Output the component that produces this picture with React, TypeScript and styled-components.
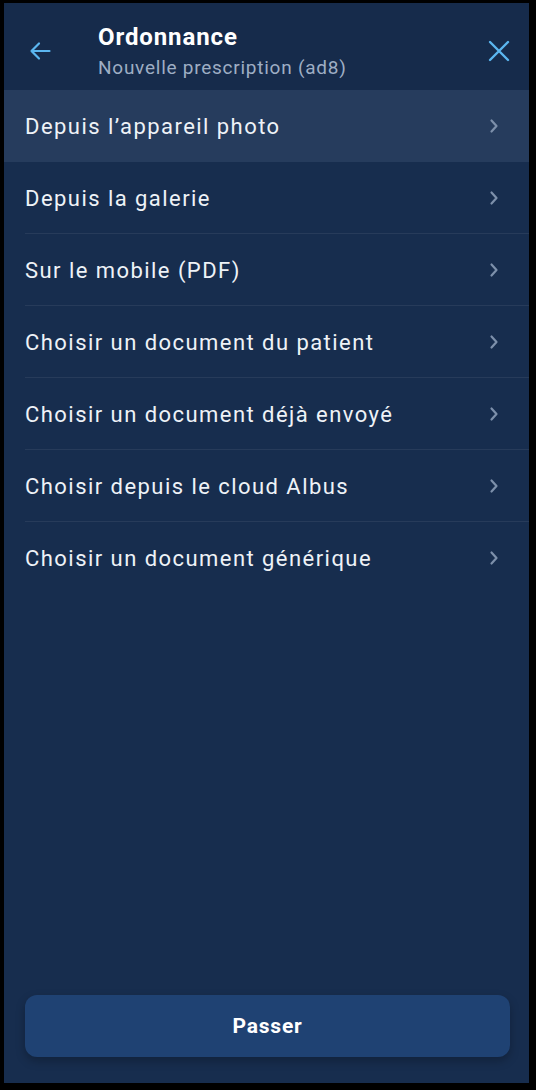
import React from 'react';
import styled, { createGlobalStyle } from 'styled-components';

const GlobalStyle = createGlobalStyle`
  html, body {
    margin: 0;
    padding: 0;
    background: #000;
  }
  * {
    box-sizing: border-box;
  }
`;

const Frame = styled.div`
  width: 536px;
  height: 1090px;
  padding: 3px 7px 7px 4px;
  background: #000;
`;

const Screen = styled.div`
  height: 100%;
  display: flex;
  flex-direction: column;
  background: #172d4e;
  font-family: Roboto, 'Noto Sans', sans-serif;
  color: #e8edf4;
`;

const Header = styled.div`
  height: 87px;
  display: flex;
  align-items: flex-start;
  padding: 20px 16px 0 22px;
  background: #162b4b;
`;

const IconButton = styled.button`
  width: 28px;
  height: 28px;
  margin-top: 14px;
  padding: 0;
  border: none;
  background: none;
  color: #5bb6f0;
  display: flex;
  align-items: center;
  justify-content: center;
  cursor: pointer;
`;

const Titles = styled.div`
  flex: 1;
  display: flex;
  flex-direction: column;
  margin-left: 44px;
`;

const Title = styled.div`
  font-size: 24px;
  font-weight: 700;
  line-height: 29px;
  letter-spacing: 0.9px;
  color: #ffffff;
`;

const Subtitle = styled.div`
  font-size: 19px;
  line-height: 24px;
  letter-spacing: 0.75px;
  color: #9eaec4;
  margin-top: 4px;
`;

const List = styled.div`
  flex: 1;
  display: flex;
  flex-direction: column;
`;

const Row = styled.div<{ $active?: boolean }>`
  height: 72px;
  display: flex;
  align-items: center;
  justify-content: space-between;
  padding: 0 29px 0 21px;
  position: relative;
  background: ${(p) => (p.$active ? '#263c5d' : 'transparent')};
  cursor: pointer;
`;

const Divider = styled.div`
  position: absolute;
  left: 21px;
  right: 0;
  bottom: 0;
  height: 1px;
  background: rgba(255, 255, 255, 0.07);
`;

const RowLabel = styled.span`
  font-size: 22px;
  letter-spacing: 1.45px;
  color: #eef2f7;
`;

const Chevron = styled.span`
  display: flex;
  color: #7d90ab;
`;

const Footer = styled.div`
  padding: 0 19px 26px 21px;
`;

const PassButton = styled.button`
  width: 100%;
  height: 62px;
  border: none;
  border-radius: 12px;
  background: #1f4273;
  box-shadow: 0 4px 10px rgba(0, 0, 0, 0.25);
  color: #ffffff;
  font-family: Roboto, 'Noto Sans', sans-serif;
  font-size: 21px;
  font-weight: 700;
  letter-spacing: 0.8px;
  cursor: pointer;
`;

const options = [
  'Depuis l’appareil photo',
  'Depuis la galerie',
  'Sur le mobile (PDF)',
  'Choisir un document du patient',
  'Choisir un document déjà envoyé',
  'Choisir depuis le cloud Albus',
  'Choisir un document générique',
];

const ChevronIcon = () => (
  <svg width="12" height="16" viewBox="0 0 12 16" fill="none">
    <path d="M3.5 2.5 L8.5 8 L3.5 13.5" stroke="currentColor" strokeWidth="2.2" strokeLinecap="round" strokeLinejoin="round" />
  </svg>
);

const App: React.FC = () => {
  return (
    <>
      <GlobalStyle />
      <Frame>
        <Screen>
          <Header>
            <IconButton aria-label="Retour">
              <svg width="24" height="24" viewBox="0 0 24 24" fill="none">
                <path d="M21.5 12H3.5M11 4.5L3.5 12L11 19.5" stroke="currentColor" strokeWidth="2.2" strokeLinecap="round" strokeLinejoin="round" />
              </svg>
            </IconButton>
            <Titles>
              <Title>Ordonnance</Title>
              <Subtitle>Nouvelle prescription (ad8)</Subtitle>
            </Titles>
            <IconButton aria-label="Fermer">
              <svg width="22" height="22" viewBox="0 0 22 22" fill="none">
                <path d="M2 2L20 20M20 2L2 20" stroke="currentColor" strokeWidth="2.4" strokeLinecap="round" />
              </svg>
            </IconButton>
          </Header>
          <List>
            {options.map((label, i) => (
              <Row key={label} $active={i === 0}>
                <RowLabel>{label}</RowLabel>
                <Chevron>
                  <ChevronIcon />
                </Chevron>
                {i > 0 && i < options.length - 1 && <Divider />}
              </Row>
            ))}
          </List>
          <Footer>
            <PassButton>Passer</PassButton>
          </Footer>
        </Screen>
      </Frame>
    </>
  );
};

export default App;
